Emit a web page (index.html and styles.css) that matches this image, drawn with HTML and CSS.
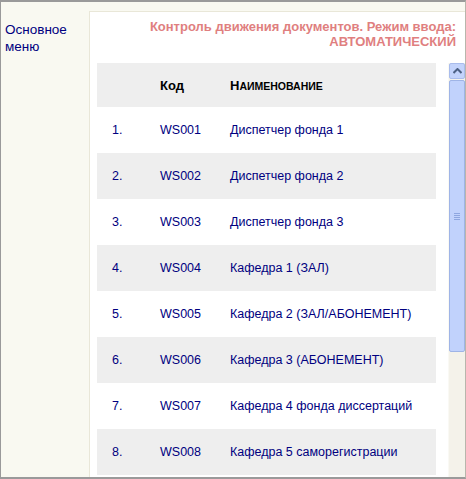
FILE: index.html
```
<!DOCTYPE html>
<html lang="ru">
<head>
<meta charset="utf-8">
<link rel="stylesheet" href="styles.css">
</head>
<body>
<div class="frame">
  <aside class="side">
    <div class="menu-title">Основное<br>меню</div>
  </aside>
  <main class="panel">
    <div class="title">Контроль движения документов. Режим ввода:<br>АВТОМАТИЧЕСКИЙ</div>
    <div class="scroller">
      <table class="grid">
        <thead>
          <tr><th class="c-num"></th><th class="c-code">Код</th><th class="c-name">Н<span class="sc">аименование</span></th></tr>
        </thead>
        <tbody>
          <tr><td class="c-num">1.</td><td class="c-code">WS001</td><td>Диспетчер фонда 1</td></tr>
          <tr class="alt"><td class="c-num">2.</td><td class="c-code">WS002</td><td>Диспетчер фонда 2</td></tr>
          <tr><td class="c-num">3.</td><td class="c-code">WS003</td><td>Диспетчер фонда 3</td></tr>
          <tr class="alt"><td class="c-num">4.</td><td class="c-code">WS004</td><td>Кафедра 1 (ЗАЛ)</td></tr>
          <tr><td class="c-num">5.</td><td class="c-code">WS005</td><td>Кафедра 2 (ЗАЛ/АБОНЕМЕНТ)</td></tr>
          <tr class="alt"><td class="c-num">6.</td><td class="c-code">WS006</td><td>Кафедра 3 (АБОНЕМЕНТ)</td></tr>
          <tr><td class="c-num">7.</td><td class="c-code">WS007</td><td>Кафедра 4 фонда диссертаций</td></tr>
          <tr class="alt"><td class="c-num">8.</td><td class="c-code">WS008</td><td>Кафедра 5 саморегистрации</td></tr>
        </tbody>
      </table>
      <div class="sbar">
        <div class="sbtn">
          <svg width="9" height="6" viewBox="0 0 9 6"><path d="M0.5 5 L4.5 1 L8.5 5" fill="none" stroke="#4d6185" stroke-width="2"/></svg>
        </div>
        <div class="thumb">
          <div class="grip"><i></i><i></i><i></i><i></i></div>
        </div>
        <div class="track"></div>
      </div>
    </div>
  </main>
</div>
</body>
</html>
```
FILE: styles.css
```
html, body {
  margin: 0;
  padding: 0;
}
body {
  width: 466px;
  height: 479px;
  overflow: hidden;
  font-family: "Liberation Sans", Arial, sans-serif;
}
.frame {
  box-sizing: border-box;
  width: 466px;
  height: 479px;
  border-top: 2px solid #9a9a9a;
  border-left: 1px solid #9a9a9a;
  border-bottom: 2px solid #9a9a9a;
  border-right: 1px solid #b8b6ac;
  background: #f9f9f1;
  display: flex;
}
.side {
  width: 88px;
  flex: none;
  padding: 19px 0 0 4px;
  box-sizing: border-box;
}
.menu-title {
  color: #000080;
  font-size: 13.5px;
  line-height: 17px;
}
.panel {
  flex: 1;
  margin-top: 9px;
  background: #fff;
  border-top: 1px solid #e9e7d8;
  border-left: 1px solid #e9e7d8;
  padding: 7px 0 0 7px;
  display: flex;
  flex-direction: column;
  min-width: 0;
}
.title {
  color: #e07f7f;
  font-weight: bold;
  font-size: 13px;
  line-height: 15px;
  text-align: right;
  padding-right: 9px;
  height: 44px;
}
.scroller {
  display: flex;
  gap: 12px;
  flex: 1;
  min-height: 0;
}
.grid {
  width: 339px;
  border-collapse: collapse;
  font-size: 12.5px;
  color: #000080;
  align-self: flex-start;
}
.grid th, .grid td {
  padding: 0;
  text-align: left;
  vertical-align: middle;
  white-space: nowrap;
}
.grid thead tr {
  background: #eeeeee;
  height: 44px;
}
.grid th {
  color: #000;
  font-weight: bold;
  font-size: 13px;
}
.grid .sc {
  text-transform: uppercase;
  font-size: 10.5px;
}
.grid tbody tr {
  height: 46px;
}
.grid tbody tr.alt {
  background: #eeeeee;
}
.c-num {
  width: 48px;
  padding-left: 15px !important;
}
.c-code {
  width: 70px;
}
.sbar {
  width: 16px;
  flex: none;
  display: flex;
  flex-direction: column;
  background: #f4f2ea;
  border-left: 1px solid #faf9f4;
}
.sbtn {
  height: 16px;
  box-sizing: border-box;
  margin: 0 0 1px 0;
  background: #c3d3fb;
  border: 1px solid #a9bcec;
  border-radius: 2px;
  display: flex;
  align-items: center;
  justify-content: center;
}
.thumb {
  height: 272px;
  box-sizing: border-box;
  background: #c1d2fc;
  border: 1px solid #9fb4e6;
  border-radius: 2px;
  display: flex;
  align-items: center;
  justify-content: center;
}
.grip {
  display: flex;
  flex-direction: column;
  gap: 1px;
}
.grip i {
  display: block;
  width: 6px;
  height: 1px;
  background: #8ea6e0;
}
.track {
  flex: 1;
}
```
